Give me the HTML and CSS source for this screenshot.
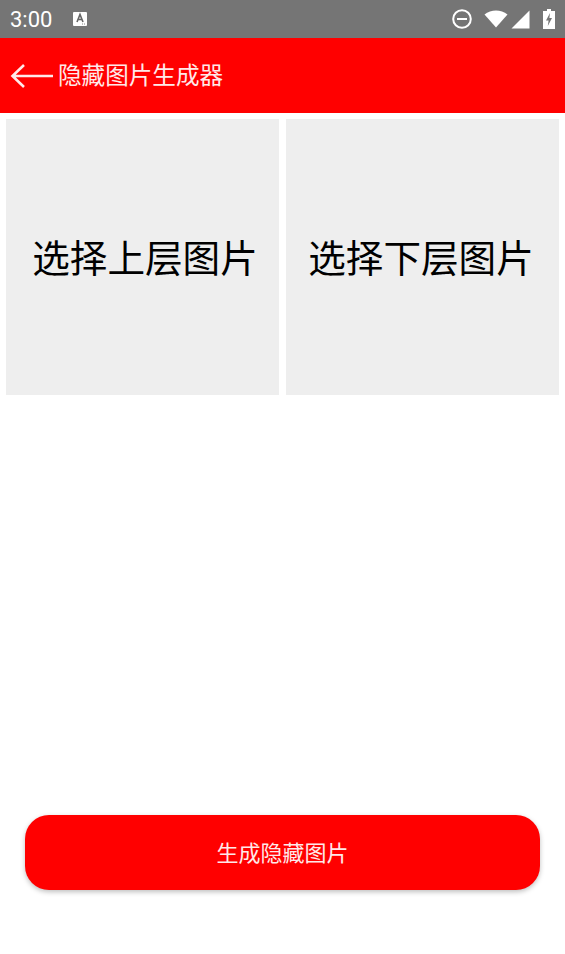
FILE: index.html
```html
<!DOCTYPE html>
<html lang="zh-CN">
<head>
    <meta charset="UTF-8">
    <meta name="viewport" content="width=device-width, initial-scale=1.0">
    <title>隐藏图片生成器</title>
    <link rel="stylesheet" href="styles.css">
</head>
<body>

    <!-- Status bar -->
    <div class="status-bar">
        <span class="clock">3:00</span>
        <svg class="notice-icon" width="16" height="16" viewBox="0 0 16 16">
            <rect x="1" y="1" width="14" height="14" rx="1" fill="#fff"/>
            <path d="M5 11 L8 3.5 L11 11 M6.2 8.5 H9.8" fill="none" stroke="#666" stroke-width="1.6"/>
            <path d="M10 13 h1 M12 13 h1" stroke="#888" stroke-width="1"/>
        </svg>
        <div class="status-icons">
            <svg width="22" height="22" viewBox="0 0 22 22">
                <circle cx="11" cy="11" r="8.8" fill="none" stroke="#fff" stroke-width="2"/>
                <rect x="6" y="10" width="10" height="2" fill="#fff"/>
            </svg>
            <svg class="wifi" width="24" height="18" viewBox="0 0 24 18">
                <path d="M0.5 4.5 C7 -0.8 17 -0.8 23.5 4.5 L12 17.5 Z" fill="#fff"/>
            </svg>
            <svg class="signal" width="19" height="19" viewBox="0 0 19 19">
                <path d="M0.5 18.5 L18.5 0.5 V18.5 Z" fill="#fff"/>
            </svg>
            <svg class="battery" width="12" height="20" viewBox="0 0 12 20">
                <path d="M4 0 H8 V2 H12 V20 H0 V2 H4 Z" fill="#fff"/>
                <path d="M7 4 L3 11.5 H5.6 L4.8 17 L9 9 H6.4 Z" fill="#757575"/>
            </svg>
        </div>
    </div>

    <!-- Title bar -->
    <header class="title-bar">
        <svg class="back-icon" width="44" height="28" viewBox="0 0 44 28">
            <path d="M14 3 L2.5 14 L14 25 M2.5 14 H43" fill="none" stroke="#ffe9e9" stroke-width="2.6"/>
        </svg>
        <h1>隐藏图片生成器</h1>
    </header>

    <!-- Image pickers -->
    <div class="pickers">
        <div class="picker picker-upper">选择上层图片</div>
        <div class="picker picker-lower">选择下层图片</div>
    </div>

    <!-- Generate button -->
    <div class="action">
        <button class="generate">生成隐藏图片</button>
    </div>

</body>
</html>
```

FILE: styles.css
```css
/* General body styling */
body {
    font-family: "Roboto", "Noto Sans CJK SC", sans-serif;
    margin: 0;
    padding: 0;
    height: 954px;
    background-color: white;
    display: flex;
    flex-direction: column;
    overflow: hidden;
}

/* Status bar */
.status-bar {
    height: 38px;
    flex: none;
    background-color: #757575;
    color: white;
    display: flex;
    align-items: center;
    padding: 0 10px 0 10px;
    box-sizing: border-box;
}

.clock {
    font-size: 22px;
}

.notice-icon {
    margin-left: 20px;
}

.status-icons {
    margin-left: auto;
    display: flex;
    align-items: center;
}

.wifi {
    margin-left: 11px;
}

.signal {
    margin-left: 3px;
}

.battery {
    margin-left: 13px;
}

/* Title bar */
.title-bar {
    height: 75px;
    flex: none;
    background-color: #ff0000;
    display: flex;
    align-items: center;
    padding-left: 10px;
    box-sizing: border-box;
}

.title-bar h1 {
    margin: 0 0 4px 4px;
    font-size: 23.6px;
    font-weight: normal;
    color: #ffe9e9;
}

/* Image pickers */
.pickers {
    display: grid;
    grid-template-columns: 273px 273px;
    gap: 7px;
    padding: 6px 6px 0;
}

.picker {
    height: 276px;
    box-sizing: border-box;
    padding-bottom: 3px;
    background-color: #eeeeee;
    display: flex;
    align-items: center;
    justify-content: center;
    font-size: 37.6px;
    color: black;
}

.picker-upper {
    padding-left: 5px;
}

.picker-lower {
    padding-right: 3px;
}

/* Generate button */
.action {
    margin-top: auto;
    padding: 0 25px 64px;
}

.generate {
    display: block;
    width: 100%;
    height: 75px;
    padding: 0 0 4px;
    border: none;
    border-radius: 24px;
    background-color: #ff0000;
    color: #ffe9e9;
    font-family: inherit;
    font-size: 22px;
    box-shadow: 0 2px 5px rgba(0, 0, 0, 0.25);
}
```
